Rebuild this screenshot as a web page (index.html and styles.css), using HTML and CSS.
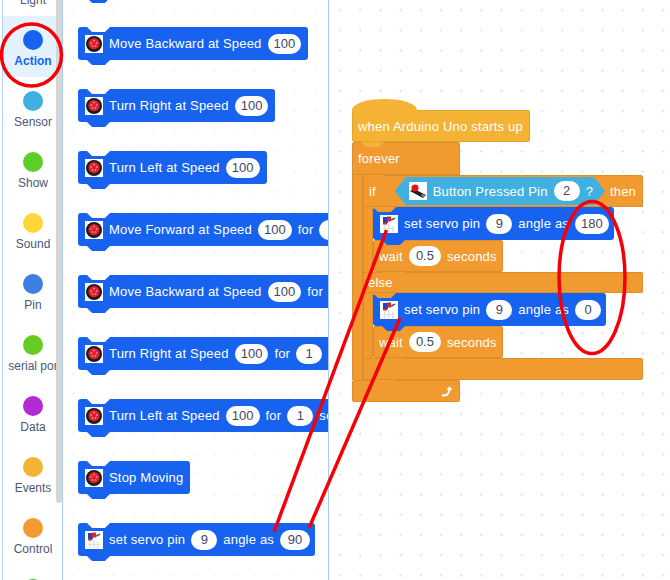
FILE: index.html
```html
<!DOCTYPE html>
<html lang="en">
<head>
<meta charset="utf-8">
<title>Blocks editor</title>
<link rel="stylesheet" href="styles.css">
</head>
<body>
<svg class="defs" width="0" height="0" aria-hidden="true">
  <symbol id="wheel" viewBox="0 0 18 18">
    <rect width="18" height="18" fill="#fff"/>
    <circle cx="9" cy="9" r="8" fill="#1c1c1c"/>
    <circle cx="9" cy="8.6" r="5.6" fill="#e3202e"/>
    <g fill="#f7b7bb"><circle cx="9" cy="5.5" r=".8"/><circle cx="6.2" cy="8" r=".8"/><circle cx="11.8" cy="8" r=".8"/><circle cx="7.5" cy="11" r=".8"/><circle cx="10.5" cy="11" r=".8"/></g>
  </symbol>
  <symbol id="servo" viewBox="0 0 18 18">
    <rect width="18" height="18" fill="#fff"/>
    <g fill="#dfe2df"><rect x="4" y="10" width="1.500" height="7"/><rect x="8" y="9" width="1.500" height="8"/><rect x="12" y="11" width="1.500" height="6"/><rect x="3" y="13" width="12" height="1"/></g>
    <path d="M3 2h5v6H3z" fill="#2742b8"/>
    <path d="M7 1.500h4v5H7zM3 7.500h4v2H3z" fill="#d52a2a"/>
    <path d="M11 4l4-1.500.5 1L11.500 6z" fill="#555"/>
  </symbol>
  <symbol id="button" viewBox="0 0 18 18">
    <rect width="18" height="18" fill="#fff"/>
    <path d="M1 9l4-2 12 6-3 3z" fill="#1e1e1e"/>
    <path d="M12 12l5 1-3 3z" fill="#8a8a8a"/>
    <circle cx="6" cy="6" r="3.600" fill="#e5141c"/>
  </symbol>
</svg>

<div class="app">
  <aside class="sidebar">
    <nav class="cats">
      <div class="cat"><span class="dot light"></span><span class="cat-label">Light</span></div>
      <div class="cat active"><span class="dot action"></span><span class="cat-label">Action</span></div>
      <div class="cat"><span class="dot sensor"></span><span class="cat-label">Sensor</span></div>
      <div class="cat"><span class="dot show"></span><span class="cat-label">Show</span></div>
      <div class="cat"><span class="dot sound"></span><span class="cat-label">Sound</span></div>
      <div class="cat"><span class="dot pin"></span><span class="cat-label">Pin</span></div>
      <div class="cat"><span class="dot serial"></span><span class="cat-label">serial por</span></div>
      <div class="cat"><span class="dot data"></span><span class="cat-label">Data</span></div>
      <div class="cat"><span class="dot events"></span><span class="cat-label">Events</span></div>
      <div class="cat"><span class="dot control"></span><span class="cat-label">Control</span></div>
      <div class="cat"><span class="dot extra"></span><span class="cat-label">Math</span></div>
    </nav>
    <div class="track"><div class="thumb"></div></div>
  </aside>

  <section class="palette">
    <div class="block blue"><svg class="icon"><use href="#wheel"/></svg><span>Move Forward at Speed</span><span class="pill">100</span></div>
    <div class="block blue"><svg class="icon"><use href="#wheel"/></svg><span>Move Backward at Speed</span><span class="pill">100</span></div>
    <div class="block blue"><svg class="icon"><use href="#wheel"/></svg><span>Turn Right at Speed</span><span class="pill">100</span></div>
    <div class="block blue"><svg class="icon"><use href="#wheel"/></svg><span>Turn Left at Speed</span><span class="pill">100</span></div>
    <div class="block blue"><svg class="icon"><use href="#wheel"/></svg><span>Move Forward at Speed</span><span class="pill">100</span><span>for</span><span class="pill">1</span><span>secs</span></div>
    <div class="block blue"><svg class="icon"><use href="#wheel"/></svg><span>Move Backward at Speed</span><span class="pill">100</span><span>for</span><span class="pill">1</span><span>secs</span></div>
    <div class="block blue"><svg class="icon"><use href="#wheel"/></svg><span>Turn Right at Speed</span><span class="pill">100</span><span>for</span><span class="pill">1</span><span>secs</span></div>
    <div class="block blue"><svg class="icon"><use href="#wheel"/></svg><span>Turn Left at Speed</span><span class="pill">100</span><span>for</span><span class="pill">1</span><span>secs</span></div>
    <div class="block blue"><svg class="icon"><use href="#wheel"/></svg><span>Stop Moving</span></div>
    <div class="block blue servo"><svg class="icon"><use href="#servo"/></svg><span>set servo pin</span><span class="pill">9</span><span>angle as</span><span class="pill wide">90</span></div>
  </section>

  <main class="workspace">
    <div class="script">
      <div class="block hat">when Arduino Uno starts up</div>
      <div class="c forever">
        <div class="block orange c-head forever-head">forever</div>
        <div class="c-body">
          <div class="c-arm outer-arm"></div>
          <div class="c if">
            <div class="block orange c-head if-head">
              <span class="if-word">if</span>
              <div class="hex"><svg class="icon"><use href="#button"/></svg><span>Button Pressed Pin</span><span class="pill">2</span><span>?</span></div>
              <span>then</span>
            </div>
            <div class="c-body">
              <div class="c-arm"></div>
              <div class="stack">
                <div class="block blue servo"><svg class="icon"><use href="#servo"/></svg><span>set servo pin</span><span class="pill">9</span><span>angle as</span><span class="pill">180</span></div>
                <div class="block orange wait"><span>wait</span><span class="pill half">0.5</span><span>seconds</span></div>
              </div>
            </div>
            <div class="block orange c-mid">else</div>
            <div class="c-body">
              <div class="c-arm"></div>
              <div class="stack">
                <div class="block blue servo"><svg class="icon"><use href="#servo"/></svg><span>set servo pin</span><span class="pill">9</span><span>angle as</span><span class="pill">0</span></div>
                <div class="block orange wait"><span>wait</span><span class="pill half">0.5</span><span>seconds</span></div>
              </div>
            </div>
            <div class="block orange c-mid c-end"></div>
          </div>
        </div>
        <div class="block orange c-foot forever-foot">
          <svg class="loop" viewBox="0 0 14 14"><path d="M2 11c4 1.500 7-.5 7.500-6" fill="none" stroke="#fff" stroke-width="2"/><path d="M6.500 6l3-4 3 4z" fill="#fff"/></svg>
        </div>
      </div>
    </div>
  </main>

  <svg class="marks" viewBox="0 0 670 580" aria-hidden="true">
    <ellipse cx="31.500" cy="55" rx="30" ry="31"/>
    <ellipse cx="592" cy="277.500" rx="33" ry="76"/>
    <line x1="274" y1="532" x2="386.500" y2="230"/>
    <line x1="309" y1="528" x2="400" y2="318"/>
  </svg>
</div>
</body>
</html>
```

FILE: styles.css
```css
* { box-sizing: border-box; }

html, body { margin: 0; height: 100%; background: #fff; }

.defs { position: absolute; }

.app {
  position: relative;
  display: flex;
  width: 670px;
  height: 580px;
  overflow: hidden;
  font-family: "Liberation Sans", Arial, sans-serif;
  background: #fff;
}

/* Category rail */
.sidebar {
  display: flex;
  flex: none;
  width: 61px;
  margin-left: 2px;
  border-left: 1px solid #b5d3fb;
  border-right: 1px solid #a9cbfb;
}

.cats {
  flex: none;
  width: 53px;
  margin-top: -45px;
}

.cat {
  display: flex;
  flex-direction: column;
  align-items: center;
  height: 61px;
  padding: 14px 0 0 7px;
  gap: 4px;
  overflow: hidden;
  font-size: 12px;
  line-height: 15px;
  color: #4d5675;
  white-space: nowrap;
}

.cat.active {
  background: #e3f2fd;
  color: #1763f0;
  font-weight: 700;
}

.dot {
  flex: none;
  width: 20px;
  height: 20px;
  border-radius: 50%;
}

.light { background: #9a5ce6; }
.action { background: #1763f0; }
.sensor { background: #3fb0e0; }
.show { background: #5bcf27; }
.sound { background: #fdd63a; }
.pin { background: #3d7fe3; }
.serial { background: #66cc24; }
.data { background: #b12ad6; }
.events { background: #f5b335; }
.control { background: #f09a30; }
.extra { background: #58b947; }

.track { flex: none; width: 6px; }

.thumb {
  height: 503px;
  background: #d6d6d6;
  border-radius: 0 0 3px 3px;
}

/* Block palette */
.palette {
  display: flex;
  flex: none;
  flex-direction: column;
  gap: 29px;
  width: 266px;
  height: 580px;
  padding: 0 0 0 15px;
  overflow: hidden;
  border-right: 1px solid #a9cbfb;
  background-image: radial-gradient(circle, #f4f4f4 1px, transparent 1.2px);
  background-size: 20.2px 20.2px;
}

.palette .block:first-child { margin-top: -35px; }

/* Workspace */
.workspace {
  position: relative;
  flex: 1;
  background-image: radial-gradient(circle, #e4e4e4 1px, transparent 1.2px);
  background-position: 1px 0;
  background-size: 20.2px 20.2px;
}

.script {
  position: absolute;
  left: 23px;
  top: 110px;
}

/* Blocks */
.block {
  --fill: #1763f0;
  --edge: transparent;
  position: relative;
  display: flex;
  flex: none;
  align-items: center;
  gap: 6px;
  width: max-content;
  height: 33px;
  padding: 0 7px;
  border-radius: 3px;
  background: var(--fill);
  box-shadow: inset 0 0 0 1px var(--edge);
  color: #fff;
  font-size: 13px;
  letter-spacing: .2px;
  white-space: nowrap;
}

.block::before {
  content: "";
  position: absolute;
  top: 0;
  left: 9px;
  width: 23px;
  height: 5px;
  background: #fff;
  clip-path: polygon(0 0, 100% 0, 78% 100%, 22% 100%);
}

.block::after {
  content: "";
  position: absolute;
  top: 100%;
  left: 9px;
  z-index: 2;
  width: 23px;
  height: 5px;
  background: var(--fill);
  clip-path: polygon(0 0, 100% 0, 78% 100%, 22% 100%);
}

.workspace .block::before { background: none; }

.blue { --fill: #1763f0; }

.servo { padding-right: 5px; }

.orange {
  --fill: #f09a30;
  --edge: #dc8e2d;
}

.hat {
  --fill: #f5b335;
  --edge: #e0a52f;
  width: 178px;
  height: 32px;
  padding-left: 6px;
}

.hat::before {
  top: -11px;
  left: 0;
  width: 65px;
  height: 12px;
  border-radius: 32px 32px 0 0 / 11px 11px 0 0;
  clip-path: none;
}

.workspace .hat::before { background: var(--fill); }

.pill {
  flex: none;
  min-width: 26px;
  height: 20px;
  padding: 0 6px;
  border-radius: 10px;
  background: #fff;
  color: #3f4763;
  line-height: 20px;
  text-align: center;
  letter-spacing: 0;
}

.pill.wide { min-width: 30px; }
.pill.half { min-width: 32px; }

.icon {
  flex: none;
  width: 18px;
  height: 18px;
}

/* Script structure */
.c {
  display: flex;
  flex-direction: column;
}

.c-body {
  display: flex;
  align-items: stretch;
}

.c-arm {
  flex: none;
  width: 10px;
  background: #f09a30;
  box-shadow: inset 1px 0 #dc8e2d, inset -1px 0 #dc8e2d;
}

.outer-arm { width: 11px; }

.stack {
  display: flex;
  flex-direction: column;
}

.c-head {
  border-radius: 3px 3px 0 0;
  padding-left: 5px;
}

.c-head::after { left: 10px; }

.forever-head {
  width: 108px;
  padding-left: 6px;
}

.if-head {
  width: 280px;
  height: 32px;
  gap: 0;
  padding-left: 6px;
}

.if-word { width: 26px; }

.hex {
  display: flex;
  align-items: center;
  gap: 6px;
  width: 212px;
  height: 28px;
  margin-right: 5px;
  padding-left: 14px;
  background: #3fb0e0;
  clip-path: polygon(0 50%, 11px 0, calc(100% - 11px) 0, 100% 50%, calc(100% - 11px) 100%, 11px 100%);
}

.wait {
  width: 130px;
  height: 32px;
  padding-left: 6px;
}

.c-mid {
  width: 280px;
  height: 21px;
  padding-left: 5px;
  border-radius: 0 3px 3px 0;
}

.c-mid::after { left: 10px; }

.c-end { height: 22px; }

.c-end::after { left: 10px; }

.c-foot {
  justify-content: flex-end;
  width: 108px;
  height: 22px;
  padding-right: 6px;
}

.forever-foot::after { display: none; }

.loop {
  width: 14px;
  height: 14px;
}

/* Hand-drawn annotations sitting on top of the screenshot */
.marks {
  position: absolute;
  left: 0;
  top: 0;
  z-index: 5;
  width: 670px;
  height: 580px;
  fill: none;
  stroke: #f50008;
  stroke-width: 3.5;
  pointer-events: none;
}
```
